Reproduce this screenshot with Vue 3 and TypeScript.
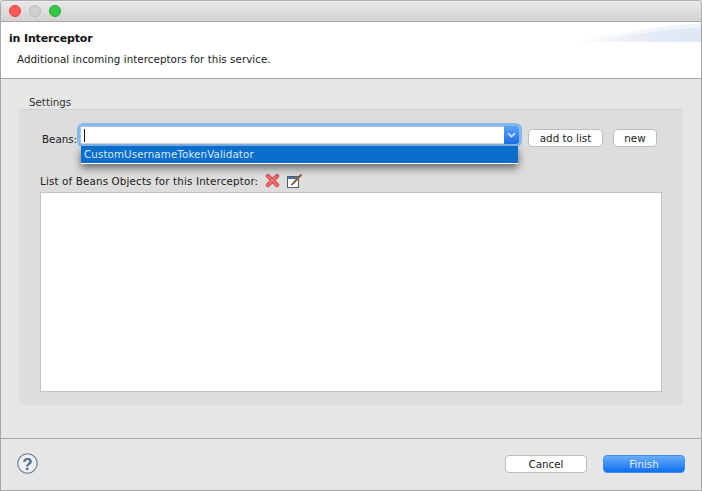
<script setup lang="ts">
const beans = 'CustomUsernameTokenValidator'
</script>

<template>
  <div class="window">
    <div class="titlebar">
      <span class="light red"></span>
      <span class="light grey"></span>
      <span class="light green"></span>
    </div>

    <div class="header">
      <svg class="banner" width="137" height="20" viewBox="0 0 137 20">
        <defs>
          <linearGradient id="fade" x1="0" x2="1" y1="0" y2="0">
            <stop offset="0" stop-color="#e0e8f5" stop-opacity="0" />
            <stop offset="0.8" stop-color="#e0e8f5" />
          </linearGradient>
        </defs>
        <path d="M0 20 C50 14 90 4 137 1 L137 20 Z" fill="url(#fade)" opacity="0.55" />
        <path d="M20 20 C60 14 100 7 137 6 L137 20 Z" fill="url(#fade)" />
      </svg>
      <h1>in Interceptor</h1>
      <p>Additional incoming interceptors for this service.</p>
    </div>

    <div class="content">
      <div class="legend">Settings</div>
      <div class="group">
        <div class="bean-row">
          <label>Beans:</label>
          <div class="combo">
            <div class="combo-input"><span class="caret"></span></div>
            <div class="combo-arrow">
              <svg width="9" height="6" viewBox="0 0 9 6">
                <path d="M1 1.2 L4.5 4.6 L8 1.2" fill="none" stroke="#d6e6fa" stroke-width="1.5" />
              </svg>
            </div>
            <div class="dropdown">{{ beans }}</div>
          </div>
          <button class="btn add">add to list</button>
          <button class="btn new">new</button>
        </div>

        <div class="list-label">
          <span>List of Beans Objects for this Interceptor:</span>
          <svg class="icon-x" width="15" height="15" viewBox="0 0 15 15">
            <path d="M3 3 L12 12 M12 3 L3 12" stroke="#dd4f52" stroke-width="4.4" stroke-linecap="round" />
            <path d="M3 3 L12 12 M12 3 L3 12" stroke="#ea7f7f" stroke-width="1.2" stroke-linecap="round" />
          </svg>
          <svg class="icon-edit" width="16" height="15" viewBox="0 0 16 15">
            <rect x="0.5" y="3.5" width="11" height="11" fill="#fdfdfd" stroke="#5a5a5a" />
            <rect x="1" y="4" width="10" height="2" fill="#3f74b5" />
            <path d="M6.5 10 L14.5 1.5" stroke="#8a6230" stroke-width="2" />
            <path d="M4.5 12 L6.5 9.8" stroke="#222" stroke-width="1.2" />
          </svg>
        </div>

        <div class="list-box"></div>
      </div>
    </div>

    <div class="footer">
      <svg class="help" width="21" height="21" viewBox="0 0 21 21">
        <circle cx="10.5" cy="10.5" r="9.7" fill="#f0f0f0" stroke="#5f7a9e" stroke-width="1.1" />
        <text x="10.5" y="16.5" text-anchor="middle" class="help-mark">?</text>
      </svg>
      <div class="actions">
        <button class="btn cancel">Cancel</button>
        <button class="btn finish">Finish</button>
      </div>
    </div>
  </div>
</template>

<style>
html, body {
  margin: 0;
  background: #e6e6e6;
}
</style>

<style scoped>
.window {
  width: 702px;
  height: 491px;
  box-sizing: border-box;
  border-left: 1px solid #a8a8a8;
  border-right: 1px solid #a8a8a8;
  border-bottom: 1px solid #a8a8a8;
  border-top: 1px solid #b0b0b0;
  border-radius: 4px 4px 0 0;
  background: #e6e6e6;
  display: flex;
  flex-direction: column;
  font-family: "DejaVu Sans", sans-serif;
  font-size: 10.3px;
  color: #1a1a1a;
  overflow: hidden;
}

.titlebar {
  height: 20px;
  flex: none;
  display: flex;
  align-items: center;
  gap: 8px;
  padding-left: 8px;
  background: linear-gradient(#e9e9e9, #d2d2d2);
  border-bottom: 1px solid #a9a9a9;
}

.light {
  width: 12px;
  height: 12px;
  border-radius: 50%;
  box-sizing: border-box;
}
.red { background: #fc5753; border: 1px solid #e0443e; }
.grey { background: #cfcfcf; border: 1px solid #bdbdbd; }
.green { background: #33c748; border: 1px solid #27aa35; }

.header {
  height: 57px;
  flex: none;
  position: relative;
  box-sizing: border-box;
  background: #fff;
  border-bottom: 1px solid #a8a8a8;
  padding: 10px 0 0 8px;
}

.banner {
  position: absolute;
  top: 0;
  right: 0;
}

h1 {
  margin: 0;
  font-size: 11px;
  line-height: 14px;
  font-weight: 700;
  color: #111;
  letter-spacing: -0.15px;
}

p {
  margin: 7px 0 0 8px;
  line-height: 13px;
  letter-spacing: 0.06px;
}

.content {
  flex: 1;
  padding: 16px 18px 0;
}

.legend {
  padding-left: 10px;
  line-height: 14px;
  color: #333;
}

.group {
  height: 296px;
  box-sizing: border-box;
  background: #dddddd;
  border-top: 1px solid #d2d2d2;
  border-radius: 4px;
  padding: 16px 21px 0 21px;
}

.bean-row {
  display: flex;
  align-items: flex-start;
  height: 24px;
}

.bean-row label {
  width: 40px;
  flex: none;
  padding: 7px 0 0 2px;
  box-sizing: border-box;
  white-space: nowrap;
}

.combo {
  position: relative;
  width: 439px;
  height: 18px;
  flex: none;
  display: flex;
  border-radius: 3px;
  box-shadow: 0 0 0 3px #86b9eb;
}

.combo-input {
  flex: 1;
  box-sizing: border-box;
  height: 17px;
  background: #fff;
  border-left: 1px solid #a9c9ea;
  border-top: 1px solid #a9c9ea;
  padding: 2px 0 0 3px;
}

.caret {
  display: block;
  width: 1px;
  height: 13px;
  background: #111;
}

.combo-arrow {
  width: 15px;
  display: flex;
  align-items: center;
  justify-content: center;
  background: linear-gradient(#5ea4f5, #1a6fe6);
  border-radius: 0 3px 3px 0;
}

.dropdown {
  position: absolute;
  left: 1px;
  top: 20px;
  width: 437px;
  height: 18px;
  box-sizing: border-box;
  padding-left: 3px;
  line-height: 17px;
  letter-spacing: 0.1px;
  background: #0b6ecd;
  color: #d8e8f8;
  border-bottom: 1px solid #fff;
  box-shadow: 0 4px 8px rgba(0, 0, 0, 0.55);
}

.btn {
  height: 18px;
  box-sizing: border-box;
  padding: 0;
  font: inherit;
  color: #1a1a1a;
  background: #fff;
  border: 1px solid #bcbcbc;
  border-radius: 4px;
}

.add {
  width: 75px;
  margin: 3px 0 0 9px;
}

.new {
  width: 44px;
  margin: 3px 0 0 10px;
}

.list-label {
  display: flex;
  align-items: center;
  margin-top: 22px;
  height: 17px;
  letter-spacing: 0.16px;
}

.icon-x { margin-left: 7px; }
.icon-edit { margin-left: 7px; }

.list-box {
  width: 622px;
  height: 200px;
  margin-top: 3px;
  box-sizing: border-box;
  background: #fff;
  border: 1px solid #c4c4c4;
}

.footer {
  height: 52px;
  flex: none;
  box-sizing: border-box;
  border-top: 1px solid #a8a8a8;
  display: flex;
  align-items: center;
  justify-content: space-between;
  padding: 0 16px 2px;
}

.help-mark {
  font: 700 17px "Liberation Sans", sans-serif;
  fill: #4f6b92;
}

.actions {
  display: flex;
  gap: 16px;
}

.cancel, .finish {
  width: 82px;
}

.finish {
  background: linear-gradient(#68aefb, #0f6ff0);
  border-color: #3f8df0;
  color: #e4eefb;
}
</style>
